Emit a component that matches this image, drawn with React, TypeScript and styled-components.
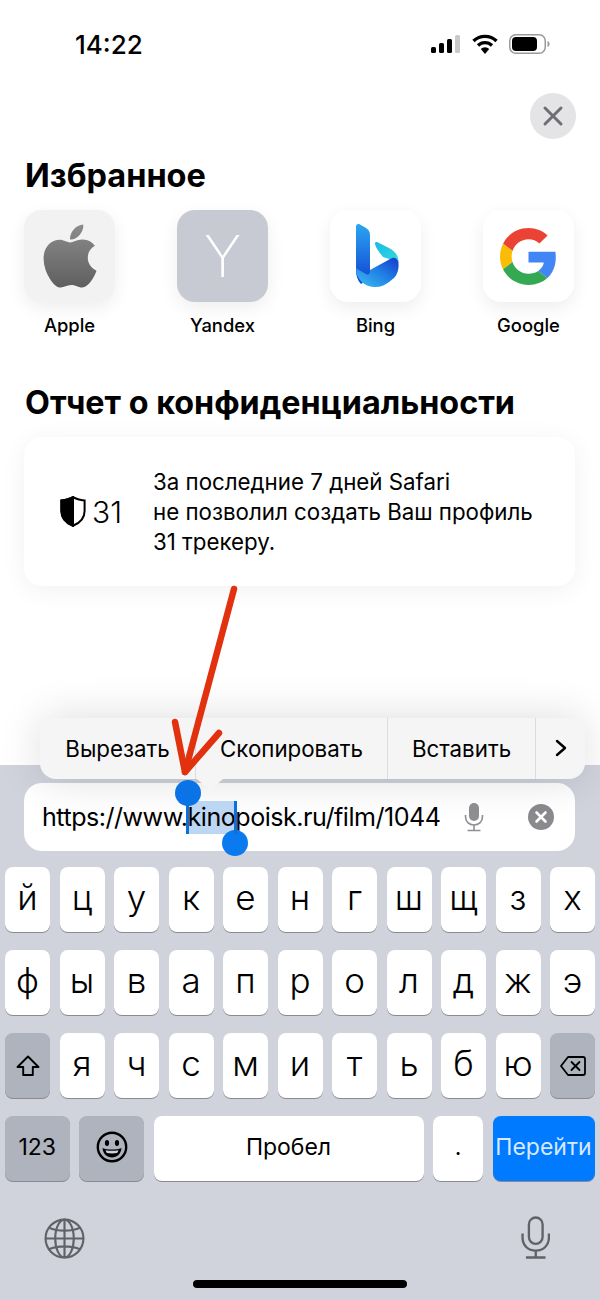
import * as React from 'react'
import styled, { createGlobalStyle } from 'styled-components'

const GlobalStyle = createGlobalStyle`
  html, body {
    margin: 0;
    padding: 0;
    background: #fff;
  }
  * {
    box-sizing: border-box;
  }
`

const favorites = ['Apple', 'Yandex', 'Bing', 'Google']
const topRow = ['й', 'ц', 'у', 'к', 'е', 'н', 'г', 'ш', 'щ', 'з', 'х']
const middleRow = ['ф', 'ы', 'в', 'а', 'п', 'р', 'о', 'л', 'д', 'ж', 'э']
const bottomRow = ['я', 'ч', 'с', 'м', 'и', 'т', 'ь', 'б', 'ю']

const AppleLogo = () => (
  <svg width="56" height="72" viewBox="0 0 384 512">
    <defs>
      <linearGradient id="appleFill" x1="0" y1="0" x2="0" y2="1">
        <stop offset="0" stopColor="#8c8c8c" />
        <stop offset="1" stopColor="#5f5f5f" />
      </linearGradient>
    </defs>
    <path
      fill="url(#appleFill)"
      d="M318.7 268.7c-.2-36.7 16.4-64.4 50-84.8-18.8-26.9-47.2-41.7-84.7-44.6-35.5-2.8-74.3 20.7-88.5 20.7-15 0-49.4-19.7-76.4-19.7C63.3 141.2 4 184.8 4 273.5q0 39.3 14.4 81.2c12.8 36.7 59 126.7 107.2 125.2 25.2-.6 43-17.9 75.8-17.9 31.8 0 48.3 17.9 76.4 17.9 48.6-.7 90.4-82.5 102.6-119.3-65.2-30.7-61.7-90-61.7-91.9zm-56.6-164.2c27.3-32.4 24.8-61.9 24-72.5-24.1 1.4-52 16.4-67.9 34.9-17.5 19.8-27.8 44.3-25.6 71.9 26.1 2 49.9-11.4 69.5-34.3z"
    />
  </svg>
)

const BingLogo = () => (
  <BingSvg width="43" height="64" viewBox="0 0 43 64">
    <defs>
      <linearGradient id="bingStem" x1="0" y1="0" x2="0" y2="1">
        <stop offset="0" stopColor="#2ba6f2" />
        <stop offset="1" stopColor="#1141d2" />
      </linearGradient>
      <linearGradient id="bingBlade" x1="0" y1="0" x2="1" y2="1">
        <stop offset="0" stopColor="#19b8ea" />
        <stop offset="1" stopColor="#35dcd6" />
      </linearGradient>
      <linearGradient id="bingBand" x1="0" y1="1" x2="1" y2="0">
        <stop offset="0" stopColor="#3cc0f2" />
        <stop offset="0.55" stopColor="#1f7de4" />
        <stop offset="1" stopColor="#1638cc" />
      </linearGradient>
    </defs>
    <path
      fill="url(#bingBlade)"
      d="M19 20 C19 18 20 17.5 22 18.5 L33 24 C39 27 43 32 42.5 39 L36 36 L27 33 C24 29 20 25 19 20 Z"
    />
    <path
      fill="url(#bingStem)"
      d="M0 3 C0 0 2 -.5 4 .5 L10 4 C13 6 14 8 14 11 L14 53 L5 60 C2 57 0 52 0 47 Z"
    />
    <path
      fill="url(#bingBand)"
      d="M0 44 C0 56 9 63 19 63 C25 63 29 61 33 58 L38 54 C41 51 43 46 42.5 39 C42 35 39 33 36 34 L14 46 L14 48 C14 50 12 51 10 50 L3 46 C1 45 0 44 0 44 Z"
    />
  </BingSvg>
)

const GoogleLogo = () => (
  <svg width="57" height="57" viewBox="0 0 48 48">
    <path fill="#EA4335" d="M24 9.5c3.54 0 6.71 1.22 9.21 3.6l6.85-6.85C35.9 2.38 30.47 0 24 0 14.62 0 6.51 5.38 2.56 13.22l7.98 6.19C12.43 13.72 17.74 9.5 24 9.5z" />
    <path fill="#4285F4" d="M46.98 24.55c0-1.57-.15-3.09-.38-4.55H24v9.02h12.94c-.58 2.96-2.26 5.48-4.78 7.18l7.73 6c4.51-4.18 7.09-10.36 7.09-17.65z" />
    <path fill="#FBBC05" d="M10.53 28.59c-.48-1.45-.76-2.99-.76-4.59s.27-3.14.76-4.59l-7.98-6.19C.92 16.46 0 20.12 0 24c0 3.88.92 7.54 2.56 10.78l7.97-6.19z" />
    <path fill="#34A853" d="M24 48c6.48 0 11.93-2.13 15.89-5.81l-7.73-6c-2.15 1.45-4.92 2.3-8.16 2.3-6.26 0-11.57-4.22-13.47-9.91l-7.98 6.19C6.51 42.62 14.62 48 24 48z" />
  </svg>
)

const StatusIcons = () => (
  <StatusGroup>
    <svg width="30" height="18" viewBox="0 0 30 18">
      <rect x="0" y="12" width="5" height="6" rx="1.5" fill="#000" />
      <rect x="8" y="8" width="5" height="10" rx="1.5" fill="#000" />
      <rect x="16" y="4" width="5" height="14" rx="1.5" fill="#000" />
      <rect x="24" y="0" width="5" height="18" rx="1.5" fill="#c9c9c9" />
    </svg>
    <svg width="26" height="20" viewBox="0 0 26 20">
      <path d="M1.5 7 A16.5 16.5 0 0 1 24.5 7" fill="none" stroke="#000" strokeWidth="3.4" />
      <path d="M6 11.5 A10 10 0 0 1 20 11.5" fill="none" stroke="#000" strokeWidth="3.4" />
      <path d="M13 20 L8.8 15 A6 6 0 0 1 17.2 15 Z" fill="#000" />
    </svg>
    <svg width="41" height="20" viewBox="0 0 41 20">
      <rect x="0.75" y="0.75" width="35.5" height="18.5" rx="6" fill="none" stroke="#9a9a9a" strokeWidth="1.5" />
      <rect x="3" y="3" width="25" height="14" rx="4" fill="#000" />
      <path d="M38.5 7 C40 7.5 40.5 8.5 40.5 10 C40.5 11.5 40 12.5 38.5 13 Z" fill="#9a9a9a" />
    </svg>
  </StatusGroup>
)

const ShieldIcon = () => (
  <svg width="26" height="31" viewBox="0 0 26 31">
    <path
      d="M13 1.2 C16 3 20 4 24.6 4.4 L24.6 15 C24.6 22 20 27 13 29.8 C6 27 1.4 22 1.4 15 L1.4 4.4 C6 4 10 3 13 1.2 Z"
      fill="none"
      stroke="#000"
      strokeWidth="2"
    />
    <path d="M13 1.2 C10 3 6 4 1.4 4.4 L1.4 15 C1.4 22 6 27 13 29.8 Z" fill="#000" stroke="#000" strokeWidth="2" />
  </svg>
)

const FieldMic = () => (
  <svg width="20" height="30" viewBox="0 0 20 30">
    <rect x="5" y="1" width="10" height="18" rx="5" fill="#8e8e93" />
    <path d="M1.5 13 V14.5 C1.5 19.5 5 23 10 23 C15 23 18.5 19.5 18.5 14.5 V13" fill="none" stroke="#8e8e93" strokeWidth="1.6" />
    <path d="M10 23 V28.5 M3.5 28.5 H16.5" fill="none" stroke="#8e8e93" strokeWidth="1.6" />
  </svg>
)

const ClearIcon = () => (
  <svg width="26" height="26" viewBox="0 0 26 26">
    <circle cx="13" cy="13" r="13" fill="#8a8a8e" />
    <path d="M8.5 8.5 L17.5 17.5 M17.5 8.5 L8.5 17.5" stroke="#fff" strokeWidth="2.6" strokeLinecap="round" />
  </svg>
)

const ShiftIcon = () => (
  <svg width="24" height="24" viewBox="0 0 24 24">
    <path
      d="M12 2.5 L22.5 13 H16.8 V21 H7.2 V13 H1.5 Z"
      fill="none"
      stroke="#000"
      strokeWidth="1.9"
      strokeLinejoin="round"
    />
  </svg>
)

const DeleteIcon = () => (
  <svg width="26" height="20" viewBox="0 0 26 20">
    <path
      d="M8 1 H23 C24 1 25 2 25 3 V17 C25 18 24 19 23 19 H8 L1 10 Z"
      fill="none"
      stroke="#000"
      strokeWidth="1.8"
      strokeLinejoin="round"
    />
    <path d="M11.5 6 L19.5 14 M19.5 6 L11.5 14" stroke="#000" strokeWidth="1.8" strokeLinecap="round" />
  </svg>
)

const EmojiIcon = () => (
  <svg width="32" height="32" viewBox="0 0 32 32">
    <circle cx="16" cy="16" r="14.2" fill="none" stroke="#000" strokeWidth="2.4" />
    <ellipse cx="11" cy="12" rx="2.1" ry="3" fill="#000" />
    <ellipse cx="21" cy="12" rx="2.1" ry="3" fill="#000" />
    <path d="M6.5 17 C11 19 21 19 25.5 17 C25 23 21 26.5 16 26.5 C11 26.5 7 23 6.5 17 Z" fill="#000" />
    <path d="M9.5 19.3 C13 20 19 20 22.5 19.3 C22 20.8 21.5 21.5 21 22 C18 22.6 14 22.6 11 22 C10.5 21.5 10 20.8 9.5 19.3 Z" fill="#d0d3dc" />
  </svg>
)

const GlobeIcon = () => (
  <svg width="41" height="41" viewBox="0 0 42 42">
    <g fill="none" stroke="#5f6368" strokeWidth="2.2">
      <circle cx="21" cy="21" r="19.4" />
      <ellipse cx="21" cy="21" rx="9.5" ry="19.4" />
      <path d="M21 1.6 V40.4 M1.6 21 H40.4 M5 10 C14 14 28 14 37 10 M5 32 C14 28 28 28 37 32" />
    </g>
  </svg>
)

const BottomMic = () => (
  <svg width="29.5" height="43" viewBox="0 0 30 44">
    <g fill="none" stroke="#5f6368" strokeWidth="2.4">
      <rect x="8" y="1.5" width="14" height="27" rx="7" />
      <path d="M1.5 18 V22 C1.5 30 7 35.5 15 35.5 C23 35.5 28.5 30 28.5 22 V18" />
      <path d="M15 35.5 V42.5 M5 42.5 H25" />
    </g>
  </svg>
)

const RedArrow = () => (
  <ArrowOverlay viewBox="0 0 80 200" width="80" height="200">
    <g fill="none" stroke="#e2310e" strokeWidth="6.5" strokeLinecap="round" strokeLinejoin="round">
      <path d="M74 5 L25 188" />
      <path d="M15 138 L25 188 L59 149" />
    </g>
  </ArrowOverlay>
)

export default function App() {
  return (
    <Page>
      <GlobalStyle />
      <TopArea>
        <StatusBar>
          <Time>14:22</Time>
          <StatusIcons />
        </StatusBar>
        <CloseRow>
          <CloseButton>
            <svg width="22" height="22" viewBox="0 0 22 22">
              <path d="M3 3 L19 19 M19 3 L3 19" stroke="#6e6e73" strokeWidth="3" strokeLinecap="round" />
            </svg>
          </CloseButton>
        </CloseRow>
        <SectionTitle>Избранное</SectionTitle>
        <Favorites>
          {favorites.map(name => (
            <Favorite key={name}>
              <Tile kind={name}>
                {name === 'Apple' && <AppleLogo />}
                {name === 'Yandex' && 'Y'}
                {name === 'Bing' && <BingLogo />}
                {name === 'Google' && <GoogleLogo />}
              </Tile>
              <FavoriteLabel>{name}</FavoriteLabel>
            </Favorite>
          ))}
        </Favorites>
        <PrivacyTitle>Отчет о конфиденциальности</PrivacyTitle>
        <PrivacyCard>
          <TrackerCount>
            <ShieldIcon />
            <span>31</span>
          </TrackerCount>
          <PrivacyText>
            За последние 7 дней Safari
            <br />
            не позволил создать Ваш профиль
            <br />
            31 трекеру.
          </PrivacyText>
        </PrivacyCard>
      </TopArea>

      <Keyboard>
        <EditMenu>
          <MenuItem w={155}>Вырезать</MenuItem>
          <MenuItem w={192} divided>Скопировать</MenuItem>
          <MenuItem w={148} divided>Вставить</MenuItem>
          <MenuItem w={50} divided>
            <svg width="12" height="18" viewBox="0 0 12 18">
              <path d="M2 2 L10 9 L2 16" fill="none" stroke="#000" strokeWidth="2.4" strokeLinecap="round" strokeLinejoin="round" />
            </svg>
          </MenuItem>
          <MenuNotch />
        </EditMenu>

        <UrlField>
          <UrlText>
            https://www.<Selected>kino<StartHandle /><EndHandle /></Selected>poisk.ru/film/1044
          </UrlText>
          <FieldIcons>
            <FieldMic />
            <ClearIcon />
          </FieldIcons>
        </UrlField>

        <KeyRows>
          <KeyRow>
            {topRow.map(k => <LetterKey key={k}>{k}</LetterKey>)}
          </KeyRow>
          <KeyRow>
            {middleRow.map(k => <LetterKey key={k}>{k}</LetterKey>)}
          </KeyRow>
          <KeyRow>
            <FunctionKey><ShiftIcon /></FunctionKey>
            {bottomRow.map(k => <LetterKey key={k}>{k}</LetterKey>)}
            <FunctionKey><DeleteIcon /></FunctionKey>
          </KeyRow>
          <KeyRow>
            <WideKey w={64.5} tone="fn">123</WideKey>
            <WideKey w={65} tone="fn"><EmojiIcon /></WideKey>
            <WideKey w={270} tone="light">Пробел</WideKey>
            <WideKey w={50} tone="light">.</WideKey>
            <WideKey w={102} tone="go">Перейти</WideKey>
          </KeyRow>
        </KeyRows>

        <BottomBar>
          <GlobeIcon />
          <BottomMic />
        </BottomBar>
        <HomeIndicator />
      </Keyboard>
      <RedArrow />
    </Page>
  )
}

const Page = styled.div`
  position: relative;
  width: 600px;
  height: 1300px;
  display: flex;
  flex-direction: column;
  overflow: hidden;
  font-family: Inter, "Liberation Sans", sans-serif;
  color: #000;
  background: #fff;
`

const TopArea = styled.div`
  flex: 0 0 765px;
  padding: 0 26px 0 24px;
  display: flex;
  flex-direction: column;
`

const StatusBar = styled.div`
  flex: 0 0 88px;
  display: flex;
  align-items: center;
  justify-content: space-between;
  padding: 0 24px 0 51px;
`

const Time = styled.div`
  font-size: 26px;
  font-weight: 500;
`

const StatusGroup = styled.div`
  display: flex;
  align-items: center;
  gap: 11px;
`

const CloseRow = styled.div`
  display: flex;
  justify-content: flex-end;
  margin: 5px -2px 0 0;
`

const CloseButton = styled.div`
  width: 46px;
  height: 46px;
  border-radius: 50%;
  background: #e4e4e6;
  display: flex;
  align-items: center;
  justify-content: center;
`

const SectionTitle = styled.h2`
  margin: 18px 0 0 1px;
  font-size: 32.5px;
  line-height: 38px;
  font-weight: 700;
`

const Favorites = styled.div`
  margin-top: 15px;
  display: flex;
  justify-content: space-between;
`

const Favorite = styled.div`
  width: 91px;
  display: flex;
  flex-direction: column;
  align-items: center;
`

const tileColors: Record<string, string> = {
  Apple: '#f2f2f3',
  Yandex: '#c8cad3',
  Bing: '#ffffff',
  Google: '#ffffff',
}

const Tile = styled.div<{ kind: string }>`
  width: 91px;
  height: 92px;
  border-radius: 18px;
  background: ${p => tileColors[p.kind]};
  box-shadow: 0 6px 18px rgba(0, 0, 0, 0.07);
  display: flex;
  align-items: center;
  justify-content: center;
  color: #fff;
  font-size: 57px;
  font-weight: 200;
`

const BingSvg = styled.svg`
  margin-left: 3px;
`

const FavoriteLabel = styled.div`
  margin-top: 12px;
  font-size: 18.4px;
  line-height: 22px;
  font-weight: 500;
  white-space: nowrap;
`

const PrivacyTitle = styled(SectionTitle)`
  margin-top: 48px;
  font-size: 32.3px;
`

const PrivacyCard = styled.div`
  margin: 15px -1px 0 0;
  height: 149px;
  border-radius: 18px;
  background: #fff;
  box-shadow: 0 4px 26px rgba(0, 0, 0, 0.06);
  display: flex;
  align-items: center;
  padding-left: 36px;
`

const TrackerCount = styled.div`
  flex: 0 0 93px;
  display: flex;
  align-items: center;
  gap: 6px;
  font-size: 30px;
  font-weight: 300;
`

const PrivacyText = styled.div`
  font-size: 22.3px;
  line-height: 30px;
`

const Keyboard = styled.div`
  flex: 1;
  position: relative;
  background: #d0d3dc;
  padding-top: 18px;
`

const EditMenu = styled.div`
  position: absolute;
  top: -47px;
  left: 40px;
  width: 545px;
  height: 61px;
  display: flex;
  border-radius: 16px;
  background: #f5f5f6;
  box-shadow: 0 0 44px rgba(0, 0, 0, 0.14);
  z-index: 2;
`

const MenuItem = styled.div<{ w: number; divided?: boolean }>`
  flex: 0 0 ${p => p.w}px;
  display: flex;
  align-items: center;
  justify-content: center;
  font-size: 22.3px;
  padding-bottom: 1px;
  border-left: ${p => (p.divided ? '1px solid #dcdcdf' : 'none')};
`

const MenuNotch = styled.div`
  position: absolute;
  left: 157px;
  top: 61px;
  width: 0;
  height: 0;
  border-left: 13px solid transparent;
  border-right: 13px solid transparent;
  border-top: 11px solid #f5f5f6;
`

const UrlField = styled.div`
  position: relative;
  margin: 0 25px 0 24px;
  height: 68px;
  border-radius: 18px;
  background: #fff;
  display: flex;
  align-items: center;
  justify-content: space-between;
  padding: 0 21px 0 18px;
`

const UrlText = styled.div`
  font-size: 25.1px;
  letter-spacing: -0.5px;
  line-height: 33px;
  white-space: nowrap;
  z-index: 3;
`

const Selected = styled.span`
  position: relative;
  display: inline-block;
  background: #bcd6f3;

  &::before,
  &::after {
    content: '';
    position: absolute;
    top: 0;
    bottom: 0;
    width: 3px;
    background: #0a6fe0;
  }

  &::before {
    left: -1.5px;
  }

  &::after {
    right: -1.5px;
  }
`

const StartHandle = styled.i`
  position: absolute;
  left: -13px;
  top: -21px;
  width: 26px;
  height: 26px;
  border-radius: 50%;
  background: #0a74e6;
`

const EndHandle = styled.i`
  position: absolute;
  right: -13px;
  bottom: -22px;
  width: 26px;
  height: 26px;
  border-radius: 50%;
  background: #0a7aee;
`

const FieldIcons = styled.div`
  display: flex;
  align-items: center;
  gap: 44px;
`

const KeyRows = styled.div`
  margin-top: 16px;
  padding: 0 5px;
  display: flex;
  flex-direction: column;
  gap: 17px;
`

const KeyRow = styled.div`
  height: 66px;
  display: flex;
  gap: 9.5px;
`

const BaseKey = styled.div`
  height: 65px;
  border-radius: 8px;
  display: flex;
  align-items: center;
  justify-content: center;
  box-shadow: 0 1px 0 #8a8b90;
`

const LetterKey = styled(BaseKey)`
  flex: 1 1 0;
  min-width: 0;
  background: #fff;
  font-size: 35px;
  font-weight: 300;
  padding-bottom: 5px;
`

const FunctionKey = styled(BaseKey)`
  flex: 1 1 0;
  min-width: 0;
  background: #aeb3be;
`

const wideKeyColors: Record<string, string> = {
  fn: '#aeb3be',
  light: '#ffffff',
  go: '#007aff',
}

const WideKey = styled(BaseKey)<{ w: number; tone: string }>`
  flex: 0 0 ${p => p.w}px;
  background: ${p => wideKeyColors[p.tone]};
  color: ${p => (p.tone === 'go' ? '#d8e9ff' : '#000')};
  font-size: 23px;
  font-weight: 400;
  padding-bottom: 4px;
`

const BottomBar = styled.div`
  margin-top: 34px;
  padding: 0 50px 0 44px;
  display: flex;
  align-items: flex-end;
  justify-content: space-between;
`

const HomeIndicator = styled.div`
  position: absolute;
  left: 193px;
  bottom: 12px;
  width: 214px;
  height: 8px;
  border-radius: 4px;
  background: #000;
`

const ArrowOverlay = styled.svg`
  position: absolute;
  left: 160px;
  top: 584px;
  z-index: 5;
  pointer-events: none;
`
